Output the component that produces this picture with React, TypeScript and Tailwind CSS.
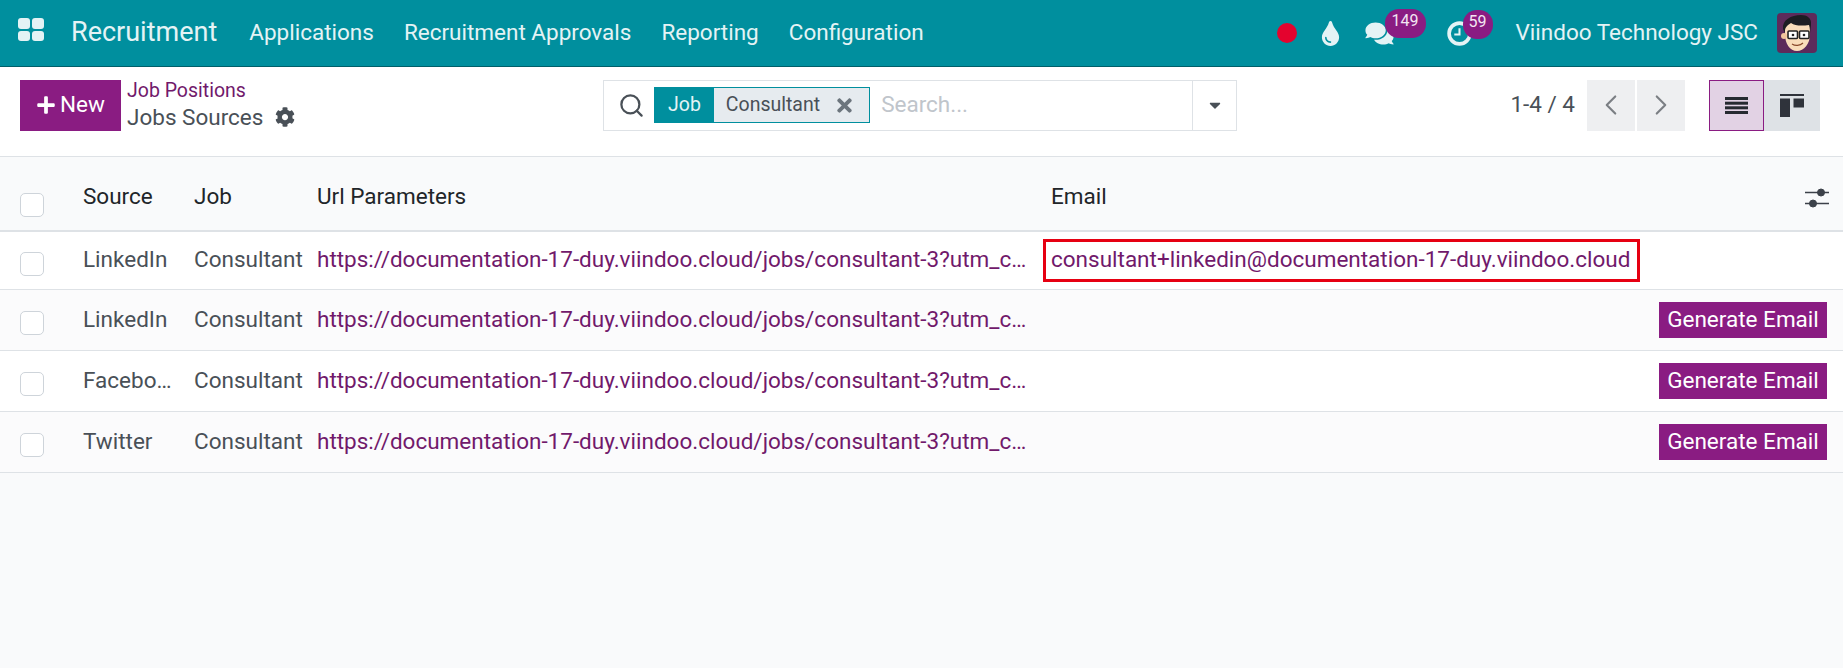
import { ChevronLeft, ChevronRight, Search } from 'lucide-react'
import { FaCaretDown, FaCog, FaComments, FaPlus, FaTimes, FaTint } from 'react-icons/fa'

const url = 'https://documentation-17-duy.viindoo.cloud/jobs/consultant-3?utm_campaign=consultant&utm_medium=website&utm_source=linkedin'

const rows = [
  { source: 'LinkedIn', email: 'consultant+linkedin@documentation-17-duy.viindoo.cloud' },
  { source: 'LinkedIn' },
  { source: 'Facebook' },
  { source: 'Twitter' },
]

function AppsIcon() {
  return (
    <div className="grid grid-cols-2 gap-[2px] w-[26px] h-[23px] shrink-0">
      <span className="bg-[#e4f3f5] rounded-[3px]" />
      <span className="bg-[#e4f3f5] rounded-[3px]" />
      <span className="bg-[#e4f3f5] rounded-[3px]" />
      <span className="bg-[#e4f3f5] rounded-[3px]" />
    </div>
  )
}

function Badge({ children, className }: { children: string; className: string }) {
  return (
    <span className={`absolute h-[29px] rounded-[14px] bg-[#8a1c82] text-[#f3e6f2] text-[16px] leading-[23px] text-center ${className}`}>
      {children}
    </span>
  )
}

function Avatar() {
  return (
    <svg viewBox="0 0 40 40" className="w-[40px] h-[40px] ml-[19px] shrink-0 rounded-[4px]">
      <rect width="40" height="40" fill="#5d2b5b" />
      <path d="M6 16C5 7 14 2 24 2c6 0 11 3 10 10l-1 8H8z" fill="#1d1d22" />
      <path d="M8 18c0-4 3-6 6-8 4 3 11 3 18 2 1 3 1 6 1 9 0 10-6 17-13 17S8 31 8 21z" fill="#f9dcba" />
      <circle cx="7" cy="23" r="3" fill="#f0c49c" />
      <rect x="11" y="18" width="9.500" height="7.500" rx="1" fill="#fff" stroke="#222" strokeWidth="1.600" />
      <rect x="22.500" y="18" width="9.500" height="7.500" rx="1" fill="#fff" stroke="#222" strokeWidth="1.600" />
      <circle cx="16" cy="22" r="1.300" fill="#222" />
      <circle cx="27" cy="22" r="1.300" fill="#222" />
      <path d="M15 31c3 2 8 2 11-1" fill="none" stroke="#8a4a2c" strokeWidth="1.200" />
    </svg>
  )
}

function Checkbox() {
  return <span className="block w-[24px] h-[24px] bg-white border border-[#ced4da] rounded-[5px]" />
}

export default function App() {
  return (
    <div className="min-h-[668px] bg-[#f9fafb] font-['Roboto',sans-serif] text-[22.5px] text-[#495057]">
      <header className="flex items-center h-[67px] bg-[#008f9e] border-b border-[#005f69] text-[#e4f3f5]">
        <div className="ml-[18px] mb-[7px]"><AppsIcon /></div>
        <span className="ml-[27px] mb-[2px] text-[27px]">Recruitment</span>
        <nav className="flex ml-[32px] gap-[30px] mb-[1px]">
          <span>Applications</span>
          <span>Recruitment Approvals</span>
          <span>Reporting</span>
          <span>Configuration</span>
        </nav>
        <div className="flex items-center ml-auto mr-[26px]">
          <span className="w-[20px] h-[20px] rounded-full bg-[#e4032e]" />
          <FaTint className="ml-[24px] w-[19px] h-[25px]" />
          <div className="relative ml-[25px]">
            <FaComments className="w-[29px] h-[25px]" />
            <Badge className="left-[20px] -top-[12px] w-[41px]">149</Badge>
          </div>
          <div className="relative ml-[53px]">
            <svg viewBox="0 0 24 24" className="block w-[25px] h-[25px]" fill="none" stroke="currentColor">
              <circle cx="12" cy="12" r="10" strokeWidth="3.500" />
              <path d="M12 7v6H7" strokeWidth="2" />
            </svg>
            <Badge className="left-[16px] -top-[11px] w-[30px]">59</Badge>
          </div>
          <span className="ml-[44px] mb-[1px]">Viindoo Technology JSC</span>
          <Avatar />
        </div>
      </header>

      <section className="flex items-center h-[90px] bg-white border-b border-[#dee2e6] pb-[13px]">
        <button className="flex items-center justify-center gap-[4px] ml-[20px] w-[101px] h-[51px] bg-[#8a1c82] text-white">
          <FaPlus className="w-[20px] h-[20px]" />
          New
        </button>
        <div className="ml-[6px] w-[476px] leading-[27px] mb-[3px]">
          <div className="text-[19.5px] text-[#71196b]">Job Positions</div>
          <div className="flex items-center gap-[12px]">
            <span>Jobs Sources</span>
            <FaCog className="w-[20px] h-[20px] text-[#495057]" />
          </div>
        </div>
        <div className="flex items-center w-[634px] h-[51px] border border-[#dee2e6]">
          <Search className="ml-[14px] w-[27px] h-[27px] text-[#495057]" strokeWidth={2} />
          <div className="flex items-stretch ml-[9px] h-[36px] border border-[#008f9e] bg-[#e6ebef]">
            <span className="flex items-center px-[13px] bg-[#008f9e] text-[#e4f3f5] text-[19.5px]">Job</span>
            <span className="flex items-center pl-[12px] text-[19.5px]">Consultant</span>
            <FaTimes className="self-center ml-[14px] mr-[14px] w-[21px] h-[21px] text-[#6c757d]" />
          </div>
          <span className="ml-[11px] text-[#c0c5cb]">Search...</span>
          <span className="flex items-center justify-center ml-auto w-[44px] h-full border-l border-[#dee2e6]">
            <FaCaretDown className="w-[18px] h-[18px] text-[#495057]" />
          </span>
        </div>
        <span className="ml-auto">1-4 / 4</span>
        <div className="flex gap-[2px] ml-[12px]">
          <span className="flex items-center justify-center w-[48px] h-[51px] bg-[#eeeff1]">
            <ChevronLeft className="w-[34px] h-[34px] text-[#7b7f84]" strokeWidth={1.500} />
          </span>
          <span className="flex items-center justify-center w-[48px] h-[51px] bg-[#eeeff1]">
            <ChevronRight className="w-[34px] h-[34px] text-[#7b7f84]" strokeWidth={1.500} />
          </span>
        </div>
        <div className="flex ml-[24px] mr-[23px]">
          <span className="flex items-center justify-center w-[55px] h-[51px] bg-[#e2d2e4] border border-[#8a1c82]">
            <svg viewBox="0 0 23 17" className="w-[23px] h-[17px]" fill="#262a30">
              <rect width="23" height="3" />
              <rect y="4.700" width="23" height="3" />
              <rect y="9.300" width="23" height="3" />
              <rect y="14" width="23" height="3" />
            </svg>
          </span>
          <span className="flex items-center justify-center w-[56px] h-[51px] bg-[#dee2e6]">
            <svg viewBox="0 0 24 23" className="w-[24px] h-[23px]" fill="#2f333b">
              <rect width="24" height="2" />
              <rect y="4.500" width="10" height="18.500" />
              <rect x="13.500" y="4.500" width="10.500" height="9" />
            </svg>
          </span>
        </div>
      </section>

      <table className="w-full table-fixed border-collapse">
        <colgroup>
          <col className="w-[75px]" />
          <col className="w-[111px]" />
          <col className="w-[123px]" />
          <col className="w-[734px]" />
          <col />
          <col className="w-[200px]" />
        </colgroup>
        <thead>
          <tr className="h-[74px] border-b-2 border-[#dee2e6] text-[#212529] font-normal">
            <th className="pl-[20px] pt-[23px]"><Checkbox /></th>
            <th className="pl-[8px] pt-[7px] font-normal text-left">Source</th>
            <th className="pl-[8px] pt-[7px] font-normal text-left">Job</th>
            <th className="pl-[8px] pt-[7px] font-normal text-left">Url Parameters</th>
            <th className="pl-[8px] pt-[7px] font-normal text-left">Email</th>
            <th className="pr-[14px] pt-[9px]">
              <svg viewBox="0 0 24 24" className="ml-auto w-[24px] h-[24px]" fill="#3c4149" stroke="#3c4149">
                <path d="M0 6.500h24M0 17.500h24" strokeWidth="1.500" />
                <circle cx="16" cy="6.500" r="3.500" />
                <circle cx="8" cy="17.500" r="3.500" />
              </svg>
            </th>
          </tr>
        </thead>
        <tbody>
          {rows.map((row, i) => (
            <tr key={i} className={`border-b border-[#dee2e6] ${i === 0 ? 'h-[58px]' : 'h-[61px]'} ${i % 2 === 0 ? 'bg-white' : 'bg-[#fbfbfc]'}`}>
              <td className="pl-[20px] pt-[7px]"><Checkbox /></td>
              <td className="pl-[8px] pr-[12px] truncate">{row.source}</td>
              <td className="pl-[8px] truncate">Consultant</td>
              <td className="pl-[8px] pr-[16px] truncate text-[#71196b]">{url}</td>
              <td className="p-0">
                {row.email && (
                  <span className="block w-[597px] h-[43px] pl-[5px] leading-[35px] border-[3px] border-[#e60012] text-[#71196b]">
                    {row.email}
                  </span>
                )}
              </td>
              <td className="pr-[16px] text-right">
                {!row.email && (
                  <button className="w-[168px] h-[36px] bg-[#8a1c82] text-white">Generate Email</button>
                )}
              </td>
            </tr>
          ))}
        </tbody>
      </table>
    </div>
  )
}
